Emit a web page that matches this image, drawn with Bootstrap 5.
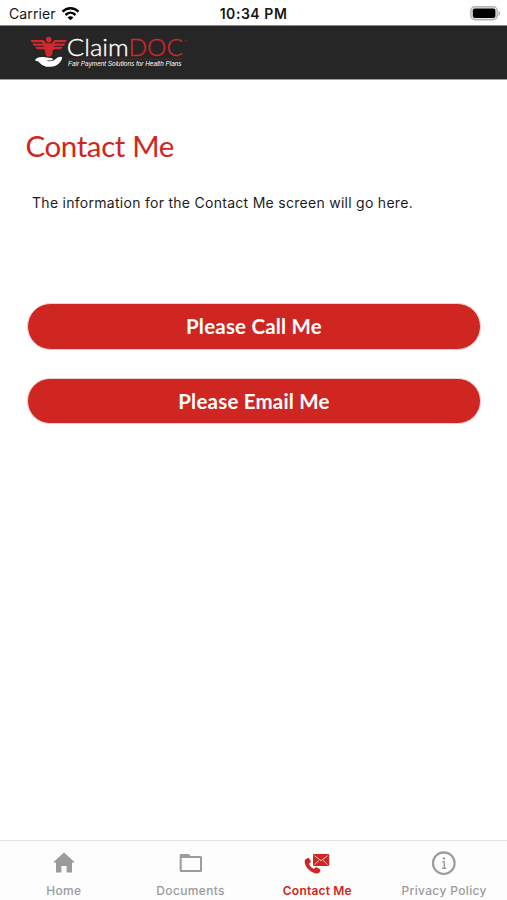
<!DOCTYPE html>
<html lang="en">
<head>
<meta charset="utf-8">
<meta name="viewport" content="width=device-width, initial-scale=1">
<title>ClaimDOC – Contact Me</title>
<link href="https://cdn.jsdelivr.net/npm/bootstrap@5.3.0/dist/css/bootstrap.min.css" rel="stylesheet">
<style>
  body { font-family: Inter, "Liberation Sans", sans-serif; color: #1c1c1c; background: #fff; overflow: hidden; }
  svg { display: block; flex: none; }
  .status-bar { height: 25px; color: #161616; padding: 2px 6px 0 9px; line-height: 23px; }
  .status-bar .side { flex: 1 1 0; }
  .carrier { font-size: 14px; letter-spacing: .1px; }
  .clock { font-size: 14px; font-weight: 600; letter-spacing: .55px; margin-right: 3px; }
  .brand-bar { height: 55px; background: #262626; border-top: 1px solid #8a8a8a; border-bottom: 1px solid #a0a0a0; padding-left: 28px; }
  .page-title { font-family: Lato, sans-serif; font-size: 29.5px; line-height: 36px; color: #cf2622; margin: 48px 0 0 25.5px; letter-spacing: -.4px; font-weight: 400; }
  .info { font-size: 14px; line-height: 20px; margin: 28.5px 0 0 32px; letter-spacing: .28px; }
  .actions { margin: 90.5px 26px 0 27px; gap: 28px; }
  .action { --bs-btn-bg: #cf2622; --bs-btn-color: #fff; --bs-btn-hover-bg: #b9201d; --bs-btn-hover-color: #fff;
    height: 46.5px; border: 1px solid #f6d0cf; font-family: Lato, sans-serif; font-size: 20.5px; font-weight: 700; line-height: 45px; padding: 0; letter-spacing: .2px; }
  .tabs { height: 60px; border-top: 1px solid #e3e3e3; background: #fdfdfd; }
  .tab { color: #9b9b9b; font-size: 12px; font-weight: 500; line-height: 14px; padding: 8px 0 0 1px; letter-spacing: .35px; text-decoration: none; white-space: nowrap; }
  .tab svg { margin-bottom: 7px; }
  .tab.current { color: #cf2622; font-weight: 600; letter-spacing: .2px; }
</style>
</head>
<body class="vh-100 d-flex flex-column">
  <div class="status-bar d-flex align-items-center">
    <div class="side d-flex align-items-center">
      <span class="carrier">Carrier</span>
      <svg class="ms-1" width="21" height="16" viewBox="-.5 0 21 16" fill="none" stroke="#000" stroke-width="2.5">
        <path d="M2 5.6C6.6 1 13.4 1 18 5.6M5 9C8 6 12 6 15 9"/>
        <path d="M10 14.2 7.1 11.4C8.7 9.8 11.3 9.8 12.9 11.4Z" fill="#000" stroke="none"/>
      </svg>
    </div>
    <span class="clock">10:34 PM</span>
    <div class="side d-flex justify-content-end">
      <svg width="31" height="15" viewBox="0 0 31 15">
        <rect x=".8" y=".8" width="26.4" height="13" rx="4" fill="#e4e4e4" stroke="#b4b4b4" stroke-width="1.4"/>
        <rect x="2.8" y="2.5" width="22.6" height="9.6" rx="2" fill="#000"/>
        <path d="M28.5 5v5c2.2-1 2.2-4 0-5Z" fill="#b4b4b4"/>
      </svg>
    </div>
  </div>

  <header class="brand-bar">
    <svg width="170" height="52" viewBox="28 26 170 52" role="img" aria-label="ClaimDOC">
      <g fill="#d3272b">
        <circle cx="48.8" cy="39.6" r="2.9"/>
        <path d="M30.5 40H43.5L46 43.2H51.8L54.3 40H67L65.8 42.3H55.5L54.4 43.4H65.2L64 45.7H54.8L53.6 46.8H62.6L61 49.2H54.2L52.5 50.5V53.5L51 56.5H46.8L45.2 53.5V50.5L43.5 49.2H36.8L35.2 46.8H44L43 45.7H33.7L32.5 43.4H43.2L42 42.3H31.8Z"/>
      </g>
      <path d="M35.5 59.2C38 56.8 42 56.5 45 57.3C47.2 58 50 57.7 52 58.2C53.4 58.6 53.2 60.1 51.8 60.2L46.5 60.7C49 61.8 53 61.3 55 59.6C57 57.8 60.5 55.9 62.2 57.4C61.6 61.8 57 66.5 50.5 66.8C45.5 67.1 42.4 65.6 39.3 62.4C38 61 36.8 61.2 35.5 61Z" fill="#fff"/>
      <g font-family="Lato, sans-serif" font-size="24" font-weight="300" stroke-width=".35">
        <text x="66.8" y="55.6" fill="#fff" stroke="#fff" textLength="62" lengthAdjust="spacingAndGlyphs">Claim</text>
        <text x="128.5" y="55.6" fill="#d3272b" stroke="#d3272b" textLength="54.5" lengthAdjust="spacingAndGlyphs">DOC</text>
      </g>
      <path d="M67 59.2H182" stroke="#d3272b" stroke-width=".6" opacity=".55"/>
      <circle cx="186" cy="40.5" r=".8" fill="#d3272b" opacity=".6"/>
      <text x="68" y="66" fill="#fff" font-family="'Liberation Sans', sans-serif" font-style="italic" font-size="7" textLength="113.5" lengthAdjust="spacingAndGlyphs">Fair Payment Solutions for Health Plans</text>
    </svg>
  </header>

  <main class="flex-grow-1">
    <h1 class="page-title">Contact Me</h1>
    <p class="info">The information for the Contact Me screen will go here.</p>
    <div class="actions d-grid">
      <button type="button" class="btn rounded-pill action">Please Call Me</button>
      <button type="button" class="btn rounded-pill action">Please Email Me</button>
    </div>
  </main>

  <nav class="tabs row g-0">
    <a class="tab col d-flex flex-column align-items-center" href="#">
      <svg width="28" height="28" viewBox="0 0 28 28" fill="#9b9b9b"><path d="M14 3.6 25 13.6H22V23.6H16.6V17H11.4V23.6H6V13.6H3Z"/></svg>
      Home
    </a>
    <a class="tab col d-flex flex-column align-items-center" href="#">
      <svg width="28" height="28" viewBox="0 0 28 28"><path d="M4 5H11.5L13.8 7H23.5Q25 7 25 8.5V21.5Q25 23 23.5 23H4.2Q2.7 23 2.7 21.5V6.3Q2.7 5 4 5ZM4.7 8.9V21.1H23V8.9Z" fill="#9b9b9b" fill-rule="evenodd"/></svg>
      Documents
    </a>
    <a class="tab current col d-flex flex-column align-items-center" href="#" aria-current="page">
      <svg width="28" height="28" viewBox="0 0 28 28"><g fill="#cf2622"><rect x="10" y="5" width="16.2" height="12" rx="1.2"/><path d="M4.8 9.1 2.2 10.5C.6 13.5 3 18.3 6.2 21.1C9.6 24 13.8 25.4 16.2 23.8L17.4 21.6C17.6 21 17.4 20.5 16.8 20.1L13.6 18.3C13 18 12.4 18.2 12 18.7L11.1 20C8.6 19.3 6.6 16.7 6 14.6L7.4 13.6C8 13.2 8.1 12.7 7.8 12.1L6.1 9.4C5.8 9 5.3 8.8 4.8 9.1Z"/></g><path d="m11.5 6.7 6.6 5 6.6-5M11.5 15.6l4.5-4.1M24.7 15.6l-4.5-4.1" fill="none" stroke="#fbdcdb" stroke-width=".9"/></svg>
      Contact Me
    </a>
    <a class="tab col d-flex flex-column align-items-center" href="#">
      <svg width="28" height="28" viewBox="0 0 28 28" fill="none" stroke="#9b9b9b"><circle cx="13.8" cy="14.2" r="10.8" stroke-width="2.1"/><path d="M12.3 12.6H14.2V19M12.1 19.2H16.3" stroke-width="1.4"/><circle cx="13.9" cy="9.5" r="1.2" fill="#9b9b9b" stroke="none"/></svg>
      Privacy Policy
    </a>
  </nav>
<script src="https://cdn.jsdelivr.net/npm/bootstrap@5.3.0/dist/js/bootstrap.bundle.min.js"></script>
</body>
</html>
